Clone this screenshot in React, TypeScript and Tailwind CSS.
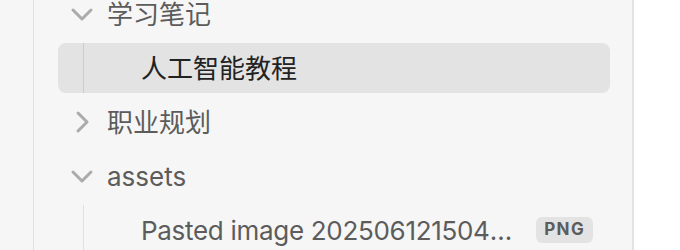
import React from "react";

const Chevron: React.FC<{ open?: boolean }> = ({ open }) => (
  <svg
    viewBox="0 0 24 24"
    className={open ? "h-6 w-6 shrink-0" : "h-6 w-6 shrink-0 -rotate-90"}
    fill="none"
    stroke="#ababab"
    strokeWidth="3"
    strokeLinecap="round"
    strokeLinejoin="round"
  >
    <path d="M3 8L12 17L21 8" />
  </svg>
);

const FolderRow: React.FC<{ name: string; open?: boolean }> = ({ name, open }) => (
  <div className="flex h-[50px] shrink-0 items-center pl-[12px]">
    <Chevron open={open} />
    <span className="ml-[13px] text-[26px] text-[#5c5c5c]">{name}</span>
  </div>
);

const App: React.FC = () => {
  return (
    <div className="flex h-[250px] w-[680px] overflow-hidden bg-white font-['Inter','Noto_Sans_CJK_SC',sans-serif]">
      <div className="flex h-full w-[634px] shrink-0 flex-col border-r-2 border-[#e3e3e3] bg-[#f6f6f6] pl-[33px]">
        <div className="flex h-full flex-col border-l border-[#e0e0e0]">
          <div className="-mt-[11px] flex flex-col gap-1 pl-[24px] pr-[22px]">
            <FolderRow name="学习笔记" open />
            <div className="flex flex-col gap-1">
              <div className="flex h-[50px] items-stretch rounded-lg bg-[#e3e3e3]">
                <div className="ml-[25px] w-px bg-[#cdcdcd]" />
                <div className="ml-[57px] flex items-center text-[26px] text-[#222222]">
                  人工智能教程
                </div>
              </div>
            </div>
            <FolderRow name="职业规划" />
            <FolderRow name="assets" open />
            <div className="flex flex-col gap-1">
              <div className="flex h-[50px] shrink-0 items-stretch pr-[17px]">
                <div className="ml-[25px] w-px bg-[#e0e0e0]" />
                <div className="ml-[57px] flex min-w-0 flex-1 items-center">
                  <span className="min-w-0 flex-1 truncate text-[26px] tracking-[-0.3px] text-[#5c5c5c]">
                    Pasted image 20250612150432
                  </span>
                  <span className="ml-[20px] flex h-[26px] shrink-0 items-center rounded-md bg-[#e3e3e3] px-[8px] text-[17px] font-bold tracking-[0.08em] text-[#5c5c5c]">
                    PNG
                  </span>
                </div>
              </div>
            </div>
          </div>
        </div>
      </div>
    </div>
  );
};

export default App;
